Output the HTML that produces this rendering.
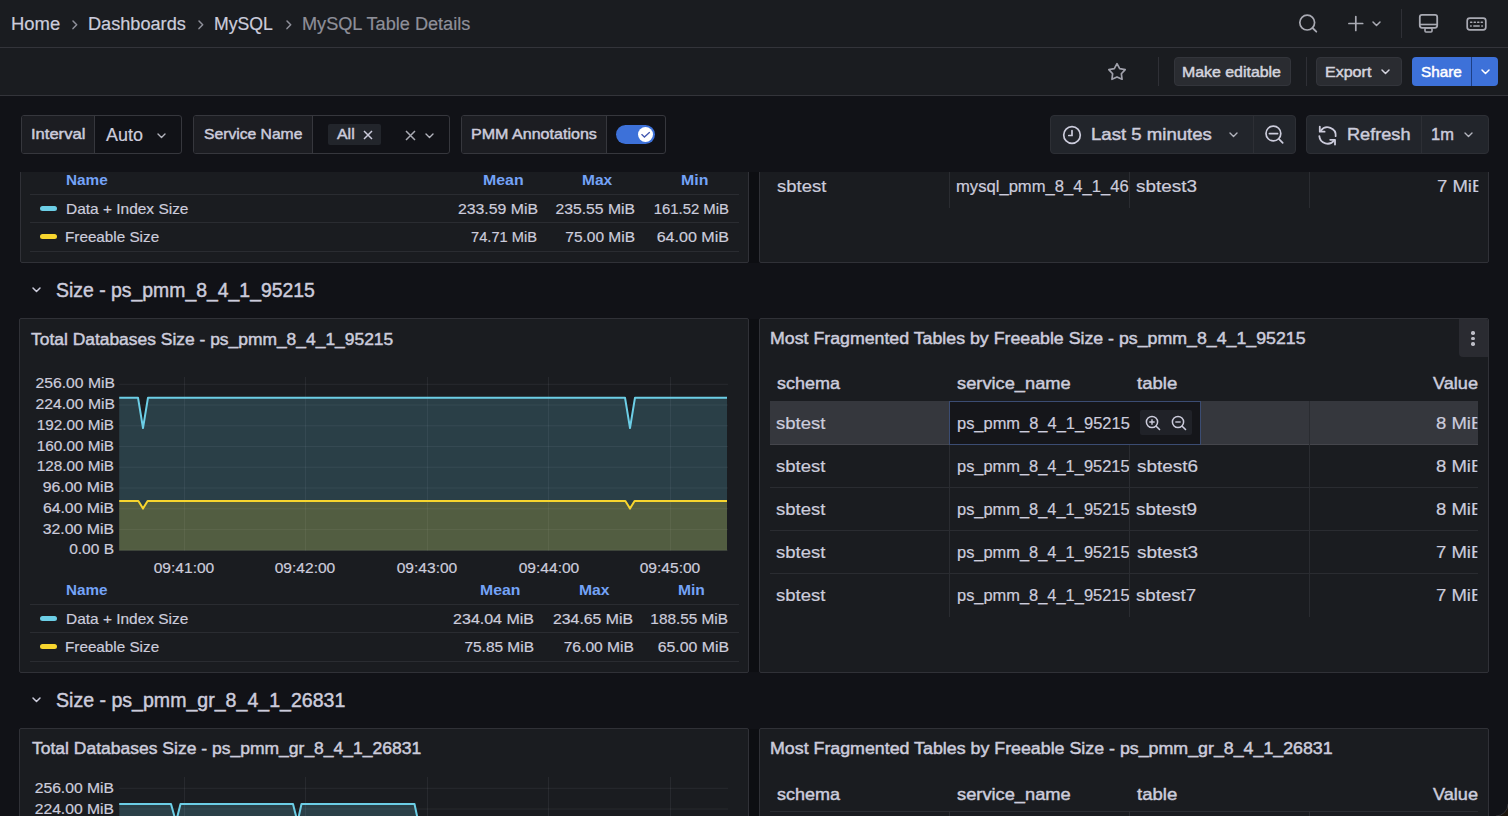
<!DOCTYPE html>
<html><head><meta charset="utf-8">
<style>
*{box-sizing:border-box;margin:0;padding:0}
html,body{width:1508px;height:816px;overflow:hidden;background:#111217;font-family:"Liberation Sans",sans-serif;color:#ccccdc}
.a{position:absolute;white-space:nowrap}
.bar{position:absolute;left:0;width:1508px;background:#1a1c20;border-bottom:1px solid #33343a}
.t{position:absolute;white-space:nowrap;line-height:1;-webkit-text-stroke:0.2px currentColor}
.ic{position:absolute;overflow:visible}
.btn{position:absolute;border-radius:4px;background:#2a2c31;border:1px solid #33353b}
.panel{position:absolute;background:#1a1c20;border:1px solid #303137;border-radius:2px;overflow:hidden}
.grp{position:absolute;border:1px solid #36373d;border-radius:3px;overflow:hidden;background:#111217}
.lbl{position:absolute;top:0;bottom:0;left:0;background:#1c1d22;border-right:1px solid #36373d}
.hl{position:absolute;height:1px;background:#2a2c31}
.vl{position:absolute;width:1px;background:#2a2c31}
.b{-webkit-text-stroke:0.3px currentColor}
.bb{font-weight:bold;-webkit-text-stroke:0}
.m{-webkit-text-stroke:0.45px currentColor}
</style></head><body>
<div class="panel" style="left:20px;top:150px;width:729px;height:113px"></div>
<div class="panel" style="left:759px;top:150px;width:730px;height:113px"></div>
<div id="t0" class="t bb" style="top:173.00px;font-size:14px;color:#74a3f7;left:65.76px;transform-origin:0 0;transform:scaleX(1.0950)">Name</div>
<div id="t1" class="t bb" style="top:173.00px;font-size:14px;color:#74a3f7;left:483.25px;transform-origin:0 0;transform:scaleX(1.1340)">Mean</div>
<div id="t2" class="t bb" style="top:173.00px;font-size:14px;color:#74a3f7;left:581.81px;transform-origin:0 0;transform:scaleX(1.1072)">Max</div>
<div id="t3" class="t bb" style="top:173.00px;font-size:14px;color:#74a3f7;left:680.70px;transform-origin:0 0;transform:scaleX(1.1338)">Min</div>
<div class="hl" style="left:30px;top:194px;width:709px"></div>
<div class="hl" style="left:30px;top:222px;width:709px"></div>
<div class="hl" style="left:30px;top:251px;width:709px"></div>
<div class="a" style="left:39.5px;top:205.5px;width:17.5px;height:5.3px;border-radius:3px;background:#6ccee6"></div>
<div id="t4" class="t " style="top:201.00px;font-size:15px;color:#ccccdc;left:65.71px;transform-origin:0 0;transform:scaleX(1.0306)">Data + Index Size</div>
<div id="t5" class="t " style="top:201.00px;font-size:15px;color:#ccccdc;left:37.79px;width:500px;text-align:right;transform-origin:100% 0;transform:scaleX(1.0543)">233.59 MiB</div>
<div id="t6" class="t " style="top:201.00px;font-size:15px;color:#ccccdc;left:135.43px;width:500px;text-align:right;transform-origin:100% 0;transform:scaleX(1.0469)">235.55 MiB</div>
<div id="t7" class="t " style="top:201.00px;font-size:15px;color:#ccccdc;left:228.76px;width:500px;text-align:right;transform-origin:100% 0;transform:scaleX(0.9919)">161.52 MiB</div>
<div class="a" style="left:39.5px;top:233.5px;width:17.5px;height:5.3px;border-radius:3px;background:#f7d52e"></div>
<div id="t8" class="t " style="top:229.00px;font-size:15px;color:#ccccdc;left:65.26px;transform-origin:0 0;transform:scaleX(1.0170)">Freeable Size</div>
<div id="t9" class="t " style="top:229.00px;font-size:15px;color:#ccccdc;left:36.98px;width:500px;text-align:right;transform-origin:100% 0;transform:scaleX(0.9761)">74.71 MiB</div>
<div id="t10" class="t " style="top:229.00px;font-size:15px;color:#ccccdc;left:135.00px;width:500px;text-align:right;transform-origin:100% 0;transform:scaleX(1.0319)">75.00 MiB</div>
<div id="t11" class="t " style="top:229.00px;font-size:15px;color:#ccccdc;left:228.79px;width:500px;text-align:right;transform-origin:100% 0;transform:scaleX(1.0710)">64.00 MiB</div>
<div class="vl" style="left:949px;top:172px;height:36px"></div>
<div class="vl" style="left:1129px;top:172px;height:36px"></div>
<div class="vl" style="left:1309px;top:172px;height:36px"></div>
<div id="t12" class="t " style="top:178.00px;font-size:17px;color:#ccccdc;left:776.95px;transform-origin:0 0;transform:scaleX(1.0862)">sbtest</div>
<div id="t13" class="t " style="top:178.00px;font-size:17px;color:#ccccdc;left:955.95px;transform-origin:0 0;transform:scaleX(0.9774)">mysql_pmm_8_4_1_46</div>
<div id="t14" class="t " style="top:178.00px;font-size:17px;color:#ccccdc;left:1135.77px;transform-origin:0 0;transform:scaleX(1.1122)">sbtest3</div>
<div id="t15" class="t " style="top:178.00px;font-size:17px;color:#ccccdc;left:1436.52px;width:38.09px;overflow:hidden;transform-origin:0 0;transform:scaleX(1.0890)">7 MiB</div>
<svg class="ic" style="left:32px;top:286.7px" width="9" height="5.5" viewBox="0 0 9 5.5"><path d="M1 1l3.5 3.5 3.5 -3.5" fill="none" stroke="#ccccdc" stroke-width="1.5" stroke-linecap="round" stroke-linejoin="round"/></svg>
<div id="t16" class="t m" style="top:281.00px;font-size:19.5px;color:#ccccdc;left:55.63px;transform-origin:0 0;transform:scaleX(0.9951)">Size - ps_pmm_8_4_1_95215</div>
<div class="a" style="left:749px;top:172px;width:10px;height:91px;background:#0d0e12"></div>
<div class="a" style="left:749px;top:319px;width:10px;height:353px;background:#0d0e12"></div>
<div class="a" style="left:749px;top:729px;width:10px;height:90px;background:#0d0e12"></div>
<div class="panel" style="left:19px;top:318px;width:730px;height:355px"></div>
<div id="t17" class="t m" style="top:332.00px;font-size:16px;color:#ccccdc;left:30.96px;transform-origin:0 0;transform:scaleX(1.0888)">Total Databases Size - ps_pmm_8_4_1_95215</div>
<div id="t18" class="t " style="top:375.00px;font-size:15px;color:#ccccdc;left:-385.46px;width:500px;text-align:right;transform-origin:100% 0;transform:scaleX(1.0469)">256.00 MiB</div>
<div id="t19" class="t " style="top:396.00px;font-size:15px;color:#ccccdc;left:-385.46px;width:500px;text-align:right;transform-origin:100% 0;transform:scaleX(1.0469)">224.00 MiB</div>
<div id="t20" class="t " style="top:417.00px;font-size:15px;color:#ccccdc;left:-386.09px;width:500px;text-align:right;transform-origin:100% 0;transform:scaleX(1.0192)">192.00 MiB</div>
<div id="t21" class="t " style="top:438.00px;font-size:15px;color:#ccccdc;left:-386.09px;width:500px;text-align:right;transform-origin:100% 0;transform:scaleX(1.0192)">160.00 MiB</div>
<div id="t22" class="t " style="top:458.00px;font-size:15px;color:#ccccdc;left:-386.09px;width:500px;text-align:right;transform-origin:100% 0;transform:scaleX(1.0192)">128.00 MiB</div>
<div id="t23" class="t " style="top:479.00px;font-size:15px;color:#ccccdc;left:-385.53px;width:500px;text-align:right;transform-origin:100% 0;transform:scaleX(1.0562)">96.00 MiB</div>
<div id="t24" class="t " style="top:500.00px;font-size:15px;color:#ccccdc;left:-386.42px;width:500px;text-align:right;transform-origin:100% 0;transform:scaleX(1.0526)">64.00 MiB</div>
<div id="t25" class="t " style="top:521.00px;font-size:15px;color:#ccccdc;left:-386.24px;width:500px;text-align:right;transform-origin:100% 0;transform:scaleX(1.0547)">32.00 MiB</div>
<div id="t26" class="t " style="top:541.00px;font-size:15px;color:#ccccdc;left:-385.89px;width:500px;text-align:right;transform-origin:100% 0;transform:scaleX(1.0345)">0.00 B</div>
<div id="t27" class="t " style="top:560.00px;font-size:15px;color:#ccccdc;left:83.92px;width:200px;text-align:center;transform-origin:50% 0;transform:scaleX(1.0374)">09:41:00</div>
<div id="t28" class="t " style="top:560.00px;font-size:15px;color:#ccccdc;left:205.32px;width:200px;text-align:center;transform-origin:50% 0;transform:scaleX(1.0374)">09:42:00</div>
<div id="t29" class="t " style="top:560.00px;font-size:15px;color:#ccccdc;left:326.52px;width:200px;text-align:center;transform-origin:50% 0;transform:scaleX(1.0374)">09:43:00</div>
<div id="t30" class="t " style="top:560.00px;font-size:15px;color:#ccccdc;left:448.72px;width:200px;text-align:center;transform-origin:50% 0;transform:scaleX(1.0374)">09:44:00</div>
<div id="t31" class="t " style="top:560.00px;font-size:15px;color:#ccccdc;left:569.92px;width:200px;text-align:center;transform-origin:50% 0;transform:scaleX(1.0374)">09:45:00</div>
<div id="t32" class="t bb" style="top:583.00px;font-size:14px;color:#74a3f7;left:65.62px;transform-origin:0 0;transform:scaleX(1.0882)">Name</div>
<div id="t33" class="t bb" style="top:583.00px;font-size:14px;color:#74a3f7;left:479.79px;transform-origin:0 0;transform:scaleX(1.1255)">Mean</div>
<div id="t34" class="t bb" style="top:583.00px;font-size:14px;color:#74a3f7;left:578.96px;transform-origin:0 0;transform:scaleX(1.1216)">Max</div>
<div id="t35" class="t bb" style="top:583.00px;font-size:14px;color:#74a3f7;left:677.72px;transform-origin:0 0;transform:scaleX(1.1145)">Min</div>
<div class="hl" style="left:30px;top:604px;width:709px"></div>
<div class="hl" style="left:30px;top:632px;width:709px"></div>
<div class="hl" style="left:30px;top:661px;width:709px"></div>
<div class="a" style="left:39.5px;top:615.5px;width:17.5px;height:5.3px;border-radius:3px;background:#6ccee6"></div>
<div id="t36" class="t " style="top:611.00px;font-size:15px;color:#ccccdc;left:65.71px;transform-origin:0 0;transform:scaleX(1.0288)">Data + Index Size</div>
<div id="t37" class="t " style="top:611.00px;font-size:15px;color:#ccccdc;left:33.87px;width:500px;text-align:right;transform-origin:100% 0;transform:scaleX(1.0658)">234.04 MiB</div>
<div id="t38" class="t " style="top:611.00px;font-size:15px;color:#ccccdc;left:132.82px;width:500px;text-align:right;transform-origin:100% 0;transform:scaleX(1.0536)">234.65 MiB</div>
<div id="t39" class="t " style="top:611.00px;font-size:15px;color:#ccccdc;left:228.36px;width:500px;text-align:right;transform-origin:100% 0;transform:scaleX(1.0231)">188.55 MiB</div>
<div class="a" style="left:39.5px;top:643.5px;width:17.5px;height:5.3px;border-radius:3px;background:#f7d52e"></div>
<div id="t40" class="t " style="top:639.00px;font-size:15px;color:#ccccdc;left:65.26px;transform-origin:0 0;transform:scaleX(1.0170)">Freeable Size</div>
<div id="t41" class="t " style="top:639.00px;font-size:15px;color:#ccccdc;left:34.31px;width:500px;text-align:right;transform-origin:100% 0;transform:scaleX(1.0306)">75.85 MiB</div>
<div id="t42" class="t " style="top:639.00px;font-size:15px;color:#ccccdc;left:133.71px;width:500px;text-align:right;transform-origin:100% 0;transform:scaleX(1.0412)">76.00 MiB</div>
<div id="t43" class="t " style="top:639.00px;font-size:15px;color:#ccccdc;left:228.66px;width:500px;text-align:right;transform-origin:100% 0;transform:scaleX(1.0550)">65.00 MiB</div>
<svg class="ic" style="left:0;top:0" width="1508" height="816"><line x1="119.2" y1="384.3" x2="728" y2="384.3" stroke="#ccccdc" stroke-opacity="0.08" stroke-width="1"/><line x1="119.2" y1="405.04" x2="728" y2="405.04" stroke="#ccccdc" stroke-opacity="0.08" stroke-width="1"/><line x1="119.2" y1="425.78000000000003" x2="728" y2="425.78000000000003" stroke="#ccccdc" stroke-opacity="0.08" stroke-width="1"/><line x1="119.2" y1="446.52" x2="728" y2="446.52" stroke="#ccccdc" stroke-opacity="0.08" stroke-width="1"/><line x1="119.2" y1="467.26" x2="728" y2="467.26" stroke="#ccccdc" stroke-opacity="0.08" stroke-width="1"/><line x1="119.2" y1="488.0" x2="728" y2="488.0" stroke="#ccccdc" stroke-opacity="0.08" stroke-width="1"/><line x1="119.2" y1="508.74" x2="728" y2="508.74" stroke="#ccccdc" stroke-opacity="0.08" stroke-width="1"/><line x1="119.2" y1="529.48" x2="728" y2="529.48" stroke="#ccccdc" stroke-opacity="0.08" stroke-width="1"/><line x1="119.2" y1="550.22" x2="728" y2="550.22" stroke="#ccccdc" stroke-opacity="0.08" stroke-width="1"/><line x1="184.5" y1="377" x2="184.5" y2="550.6" stroke="#ccccdc" stroke-opacity="0.08" stroke-width="1"/><line x1="305.5" y1="377" x2="305.5" y2="550.6" stroke="#ccccdc" stroke-opacity="0.08" stroke-width="1"/><line x1="427.5" y1="377" x2="427.5" y2="550.6" stroke="#ccccdc" stroke-opacity="0.08" stroke-width="1"/><line x1="548.5" y1="377" x2="548.5" y2="550.6" stroke="#ccccdc" stroke-opacity="0.08" stroke-width="1"/><line x1="670.5" y1="377" x2="670.5" y2="550.6" stroke="#ccccdc" stroke-opacity="0.08" stroke-width="1"/><path d="M119.2,397.7 L138,397.7 L143,428 L148,397.7 L625,397.7 L630,428 L635,397.7 L727,397.7 L727,550.6 L119.2,550.6 Z" fill="#6ccee6" fill-opacity="0.2"/><path d="M119.2,501.1 L138.4,501.1 L143,508.6 L147.6,501.1 L625.4,501.1 L630,508.6 L634.6,501.1 L727,501.1 L727,550.6 L119.2,550.6 Z" fill="#f7d52e" fill-opacity="0.2"/><path d="M119.2,397.7 L138,397.7 L143,428 L148,397.7 L625,397.7 L630,428 L635,397.7 L727,397.7" fill="none" stroke="#6ccee6" stroke-width="2" stroke-linejoin="round"/><path d="M119.2,501.1 L138.4,501.1 L143,508.6 L147.6,501.1 L625.4,501.1 L630,508.6 L634.6,501.1 L727,501.1" fill="none" stroke="#f7d52e" stroke-width="2" stroke-linejoin="round"/></svg>
<div class="panel" style="left:759px;top:318px;width:730px;height:355px"></div>
<div id="t44" class="t m" style="top:331.00px;font-size:16px;color:#ccccdc;left:769.52px;transform-origin:0 0;transform:scaleX(1.1095)">Most Fragmented Tables by Freeable Size - ps_pmm_8_4_1_95215</div>
<div class="a" style="left:1459px;top:319px;width:29px;height:38px;background:#2a2b31;border-radius:0 2px 0 4px"></div>
<div class="a" style="left:1471.3px;top:331.2px;width:3.4px;height:3.4px;border-radius:50%;background:#bdbdc6"></div>
<div class="a" style="left:1471.3px;top:336.8px;width:3.4px;height:3.4px;border-radius:50%;background:#bdbdc6"></div>
<div class="a" style="left:1471.3px;top:342.40000000000003px;width:3.4px;height:3.4px;border-radius:50%;background:#bdbdc6"></div>
<div id="t45" class="t m" style="top:375.00px;font-size:17px;color:#ccccdc;left:777.30px;transform-origin:0 0;transform:scaleX(1.0572)">schema</div>
<div id="t46" class="t m" style="top:375.00px;font-size:17px;color:#ccccdc;left:957.27px;transform-origin:0 0;transform:scaleX(1.0747)">service_name</div>
<div id="t47" class="t m" style="top:375.00px;font-size:17px;color:#ccccdc;left:1137.42px;transform-origin:0 0;transform:scaleX(1.0905)">table</div>
<div id="t48" class="t m" style="top:375.00px;font-size:17px;color:#ccccdc;left:977.95px;width:500px;text-align:right;transform-origin:100% 0;transform:scaleX(1.0667)">Value</div>
<div class="a" style="left:770px;top:401px;width:708px;height:43px;background:#35373d"></div>
<div class="hl" style="left:770px;top:444px;width:708px;background:#45464c"></div>
<div id="t49" class="t " style="top:415.00px;font-size:17px;color:#ccccdc;left:776.40px;transform-origin:0 0;transform:scaleX(1.0890)">sbtest</div>
<div id="t50" class="t " style="top:415.00px;font-size:17px;color:#ccccdc;left:1436.14px;width:38.44px;overflow:hidden;transform-origin:0 0;transform:scaleX(1.0890)">8 MiB</div>
<div class="hl" style="left:770px;top:487px;width:708px"></div>
<div id="t51" class="t " style="top:458.00px;font-size:17px;color:#ccccdc;left:776.40px;transform-origin:0 0;transform:scaleX(1.0890)">sbtest</div>
<div id="t52" class="t " style="top:458.00px;font-size:17px;color:#ccccdc;left:956.63px;transform-origin:0 0;transform:scaleX(0.9658)">ps_pmm_8_4_1_95215</div>
<div id="t53" class="t " style="top:458.00px;font-size:17px;color:#ccccdc;left:1136.57px;transform-origin:0 0;transform:scaleX(1.1117)">sbtest6</div>
<div id="t54" class="t " style="top:458.00px;font-size:17px;color:#ccccdc;left:1436.14px;width:38.44px;overflow:hidden;transform-origin:0 0;transform:scaleX(1.0890)">8 MiB</div>
<div class="hl" style="left:770px;top:530px;width:708px"></div>
<div id="t55" class="t " style="top:501.00px;font-size:17px;color:#ccccdc;left:776.40px;transform-origin:0 0;transform:scaleX(1.0890)">sbtest</div>
<div id="t56" class="t " style="top:501.00px;font-size:17px;color:#ccccdc;left:956.63px;transform-origin:0 0;transform:scaleX(0.9658)">ps_pmm_8_4_1_95215</div>
<div id="t57" class="t " style="top:501.00px;font-size:17px;color:#ccccdc;left:1136.41px;transform-origin:0 0;transform:scaleX(1.1127)">sbtest9</div>
<div id="t58" class="t " style="top:501.00px;font-size:17px;color:#ccccdc;left:1436.14px;width:38.44px;overflow:hidden;transform-origin:0 0;transform:scaleX(1.0890)">8 MiB</div>
<div class="hl" style="left:770px;top:573px;width:708px"></div>
<div id="t59" class="t " style="top:544.00px;font-size:17px;color:#ccccdc;left:776.40px;transform-origin:0 0;transform:scaleX(1.0890)">sbtest</div>
<div id="t60" class="t " style="top:544.00px;font-size:17px;color:#ccccdc;left:956.63px;transform-origin:0 0;transform:scaleX(0.9658)">ps_pmm_8_4_1_95215</div>
<div id="t61" class="t " style="top:544.00px;font-size:17px;color:#ccccdc;left:1136.53px;transform-origin:0 0;transform:scaleX(1.1139)">sbtest3</div>
<div id="t62" class="t " style="top:544.00px;font-size:17px;color:#ccccdc;left:1436.27px;width:38.32px;overflow:hidden;transform-origin:0 0;transform:scaleX(1.0890)">7 MiB</div>
<div id="t63" class="t " style="top:587.00px;font-size:17px;color:#ccccdc;left:776.40px;transform-origin:0 0;transform:scaleX(1.0890)">sbtest</div>
<div id="t64" class="t " style="top:587.00px;font-size:17px;color:#ccccdc;left:956.63px;transform-origin:0 0;transform:scaleX(0.9658)">ps_pmm_8_4_1_95215</div>
<div id="t65" class="t " style="top:587.00px;font-size:17px;color:#ccccdc;left:1135.78px;transform-origin:0 0;transform:scaleX(1.0977)">sbtest7</div>
<div id="t66" class="t " style="top:587.00px;font-size:17px;color:#ccccdc;left:1436.27px;width:38.32px;overflow:hidden;transform-origin:0 0;transform:scaleX(1.0890)">7 MiB</div>
<div class="vl" style="left:949px;top:401px;height:216px"></div>
<div class="vl" style="left:1129px;top:401px;height:216px"></div>
<div class="vl" style="left:1309px;top:401px;height:216px"></div>
<div class="a" style="left:949px;top:401px;width:252px;height:44px;background:#15161a;border:1px solid #3b4c72"></div>
<div id="t67" class="t " style="top:415.00px;font-size:17px;color:#ccccdc;left:956.78px;transform-origin:0 0;transform:scaleX(0.9673)">ps_pmm_8_4_1_95215</div>
<div class="a" style="left:1140px;top:410px;width:52px;height:25px;background:#202228;border-radius:2px"></div>
<svg class="ic" style="left:1145px;top:415px" width="16" height="16" viewBox="0 0 16 16"><circle cx="7" cy="7" r="5.6" fill="none" stroke="#ccccdc" stroke-width="1.5"/><path d="M11.2 11.2l3.3 3.3" stroke="#ccccdc" stroke-width="1.6" stroke-linecap="round"/><path d="M4.3 7h5.4M7 4.3v5.4" stroke="#ccccdc" stroke-width="1.4"/></svg>
<svg class="ic" style="left:1171px;top:415px" width="16" height="16" viewBox="0 0 16 16"><circle cx="7" cy="7" r="5.6" fill="none" stroke="#ccccdc" stroke-width="1.5"/><path d="M11.2 11.2l3.3 3.3" stroke="#ccccdc" stroke-width="1.6" stroke-linecap="round"/><path d="M4.3 7h5.4" stroke="#ccccdc" stroke-width="1.4"/></svg>
<svg class="ic" style="left:32px;top:696.6999999999999px" width="9" height="5.5" viewBox="0 0 9 5.5"><path d="M1 1l3.5 3.5 3.5 -3.5" fill="none" stroke="#ccccdc" stroke-width="1.5" stroke-linecap="round" stroke-linejoin="round"/></svg>
<div id="t68" class="t m" style="top:691.00px;font-size:19.5px;color:#ccccdc;left:55.77px;transform-origin:0 0;transform:scaleX(1.0033)">Size - ps_pmm_gr_8_4_1_26831</div>
<div class="panel" style="left:19px;top:728px;width:730px;height:120px"></div>
<div id="t69" class="t m" style="top:741.00px;font-size:16px;color:#ccccdc;left:31.86px;transform-origin:0 0;transform:scaleX(1.0939)">Total Databases Size - ps_pmm_gr_8_4_1_26831</div>
<div id="t70" class="t " style="top:780.00px;font-size:15px;color:#ccccdc;left:-385.62px;width:500px;text-align:right;transform-origin:100% 0;transform:scaleX(1.0448)">256.00 MiB</div>
<div id="t71" class="t " style="top:801.00px;font-size:15px;color:#ccccdc;left:-385.62px;width:500px;text-align:right;transform-origin:100% 0;transform:scaleX(1.0448)">224.00 MiB</div>
<svg class="ic" style="left:0;top:0" width="1508" height="816"><line x1="119.2" y1="788.3" x2="728" y2="788.3" stroke="#ccccdc" stroke-opacity="0.08" stroke-width="1"/><line x1="119.2" y1="809.04" x2="728" y2="809.04" stroke="#ccccdc" stroke-opacity="0.08" stroke-width="1"/><line x1="184.5" y1="777" x2="184.5" y2="840" stroke="#ccccdc" stroke-opacity="0.08" stroke-width="1"/><line x1="305.5" y1="777" x2="305.5" y2="840" stroke="#ccccdc" stroke-opacity="0.08" stroke-width="1"/><line x1="427.5" y1="777" x2="427.5" y2="840" stroke="#ccccdc" stroke-opacity="0.08" stroke-width="1"/><line x1="548.5" y1="777" x2="548.5" y2="840" stroke="#ccccdc" stroke-opacity="0.08" stroke-width="1"/><line x1="670.5" y1="777" x2="670.5" y2="840" stroke="#ccccdc" stroke-opacity="0.08" stroke-width="1"/><path d="M119.2,804 L171,804 L176,822 L180.5,804 L293,804 L297.5,822 L301.5,804 L414.5,804 L420,830 L420,840 L119.2,840 Z" fill="#6ccee6" fill-opacity="0.2"/><path d="M119.2,804 L171,804 L176,822 L180.5,804 L293,804 L297.5,822 L301.5,804 L414.5,804 L420,830" fill="none" stroke="#6ccee6" stroke-width="2" stroke-linejoin="round"/></svg>
<div class="panel" style="left:759px;top:728px;width:730px;height:120px"></div>
<div id="t72" class="t m" style="top:741.00px;font-size:16px;color:#ccccdc;left:769.62px;transform-origin:0 0;transform:scaleX(1.1125)">Most Fragmented Tables by Freeable Size - ps_pmm_gr_8_4_1_26831</div>
<div id="t73" class="t m" style="top:786.00px;font-size:17px;color:#ccccdc;left:777.30px;transform-origin:0 0;transform:scaleX(1.0572)">schema</div>
<div id="t74" class="t m" style="top:786.00px;font-size:17px;color:#ccccdc;left:957.27px;transform-origin:0 0;transform:scaleX(1.0747)">service_name</div>
<div id="t75" class="t m" style="top:786.00px;font-size:17px;color:#ccccdc;left:1137.42px;transform-origin:0 0;transform:scaleX(1.0905)">table</div>
<div id="t76" class="t m" style="top:786.00px;font-size:17px;color:#ccccdc;left:977.95px;width:500px;text-align:right;transform-origin:100% 0;transform:scaleX(1.0667)">Value</div>
<div class="hl" style="left:770px;top:811px;width:708px"></div>
<div class="vl" style="left:949px;top:811px;height:10px"></div>
<div class="vl" style="left:1129px;top:811px;height:10px"></div>
<div class="vl" style="left:1309px;top:811px;height:10px"></div>
<div class="a" style="left:0;top:96px;width:1508px;height:76px;background:#111217"></div>
<div class="bar" style="top:0;height:48px"></div>
<div class="bar" style="top:48px;height:48px"></div>
<div id="t77" class="t " style="top:15.00px;font-size:18px;color:#ccccdc;left:10.63px;transform-origin:0 0;transform:scaleX(1.0242)">Home</div>
<div id="t78" class="t " style="top:15.00px;font-size:18px;color:#ccccdc;left:87.86px;transform-origin:0 0;transform:scaleX(1.0077)">Dashboards</div>
<div id="t79" class="t " style="top:15.00px;font-size:18px;color:#ccccdc;left:213.91px;transform-origin:0 0;transform:scaleX(0.9806)">MySQL</div>
<div id="t80" class="t " style="top:15.00px;font-size:18px;color:#8e8f99;left:302.09px;transform-origin:0 0;transform:scaleX(1.0074)">MySQL Table Details</div>
<svg class="ic" style="left:71.8px;top:20.3px" width="7" height="10" viewBox="0 0 7 10"><path d="M1 1l3.7 3.8-3.7 3.8" fill="none" stroke="#8e8f99" stroke-width="1.5" stroke-linecap="round" stroke-linejoin="round"/></svg>
<svg class="ic" style="left:198.20000000000002px;top:20.3px" width="7" height="10" viewBox="0 0 7 10"><path d="M1 1l3.7 3.8-3.7 3.8" fill="none" stroke="#8e8f99" stroke-width="1.5" stroke-linecap="round" stroke-linejoin="round"/></svg>
<svg class="ic" style="left:285.90000000000003px;top:20.3px" width="7" height="10" viewBox="0 0 7 10"><path d="M1 1l3.7 3.8-3.7 3.8" fill="none" stroke="#8e8f99" stroke-width="1.5" stroke-linecap="round" stroke-linejoin="round"/></svg>
<svg class="ic" style="left:0;top:0" width="1508" height="100"><circle cx="1307.2" cy="22.6" r="7.4" fill="none" stroke="#a9aab3" stroke-width="1.7"/><path d="M1312.6 28l3.7 3.7" stroke="#a9aab3" stroke-width="1.8" stroke-linecap="round"/><path d="M1355.8 16.6v13.8M1348.9 23.5h13.8" stroke="#a9aab3" stroke-width="1.7" stroke-linecap="round"/></svg>
<svg class="ic" style="left:1372px;top:21px" width="9" height="5.5" viewBox="0 0 9 5.5"><path d="M1 1l3.5 3.5 3.5 -3.5" fill="none" stroke="#a9aab3" stroke-width="1.5" stroke-linecap="round" stroke-linejoin="round"/></svg>
<div class="vl" style="left:1401px;top:9px;height:29px;background:#2f3036"></div>
<svg class="ic" style="left:1418px;top:13px" width="21" height="21" viewBox="0 0 21 21"><rect x="1.8" y="1.8" width="17.4" height="13" rx="2.2" fill="none" stroke="#a9aab3" stroke-width="1.8"/><path d="M1.8 11.5h17.4" stroke="#a9aab3" stroke-width="1.6"/><rect x="7" y="15" width="7" height="4" rx="1" fill="none" stroke="#a9aab3" stroke-width="1.6"/></svg>
<svg class="ic" style="left:1466px;top:16.5px" width="21" height="14" viewBox="0 0 21 14"><rect x="1.2" y="1.2" width="18.6" height="11.6" rx="2.6" fill="none" stroke="#a9aab3" stroke-width="1.7"/><path d="M4.6 5.2h1.2M8.2 5.2h1.2M11.7 5.2h1.2M15.2 5.2h1.2M4.6 9h.6M7.8 9h5.4M15.8 9h.6" stroke="#a9aab3" stroke-width="1.5" stroke-linecap="round"/></svg>
<svg class="ic" style="left:0;top:0" width="1508" height="100"><path d="M1117.00,63.70 L1119.70,68.58 L1125.18,69.64 L1121.37,73.72 L1122.05,79.26 L1117.00,76.90 L1111.95,79.26 L1112.63,73.72 L1108.82,69.64 L1114.30,68.58 Z" fill="none" stroke="#a0a1ab" stroke-width="1.7" stroke-linejoin="round"/></svg>
<div class="vl" style="left:1158px;top:57px;height:29px;background:#2f3036"></div>
<div class="btn" style="left:1174px;top:57px;width:117px;height:29px"></div>
<div id="t81" class="t m" style="top:65.00px;font-size:14px;color:#d4d4de;left:1182.32px;transform-origin:0 0;transform:scaleX(1.1353)">Make editable</div>
<div class="vl" style="left:1306px;top:57px;height:29px;background:#2f3036"></div>
<div class="btn" style="left:1316px;top:57px;width:86px;height:29px"></div>
<div id="t82" class="t m" style="top:65.00px;font-size:14px;color:#d4d4de;left:1325.25px;transform-origin:0 0;transform:scaleX(1.1451)">Export</div>
<svg class="ic" style="left:1380.5px;top:68.5px" width="9" height="5.5" viewBox="0 0 9 5.5"><path d="M1 1l3.5 3.5 3.5 -3.5" fill="none" stroke="#d4d4de" stroke-width="1.5" stroke-linecap="round" stroke-linejoin="round"/></svg>
<div class="btn" style="left:1412px;top:57px;width:86px;height:29px;background:#3d71d9;border:none"></div>
<div class="vl" style="left:1471px;top:57px;height:29px;background:#1d3f85"></div>
<div id="t83" class="t m" style="top:65.00px;font-size:14px;color:#ffffff;left:1420.94px;transform-origin:0 0;transform:scaleX(1.0915)">Share</div>
<svg class="ic" style="left:1481px;top:68.5px" width="9" height="5.5" viewBox="0 0 9 5.5"><path d="M1 1l3.5 3.5 3.5 -3.5" fill="none" stroke="#ffffff" stroke-width="1.5" stroke-linecap="round" stroke-linejoin="round"/></svg>
<div class="grp" style="left:21px;top:115px;width:161px;height:39px"><div class="lbl" style="width:73px"></div></div>
<div id="t84" class="t m" style="top:127.00px;font-size:14.5px;color:#ccccdc;left:31.04px;transform-origin:0 0;transform:scaleX(1.1421)">Interval</div>
<div id="t85" class="t " style="top:126.00px;font-size:18px;color:#ccccdc;left:105.67px;transform-origin:0 0;transform:scaleX(0.9966)">Auto</div>
<svg class="ic" style="left:157px;top:133px" width="9" height="5.5" viewBox="0 0 9 5.5"><path d="M1 1l3.5 3.5 3.5 -3.5" fill="none" stroke="#b4b5be" stroke-width="1.4" stroke-linecap="round" stroke-linejoin="round"/></svg>
<div class="grp" style="left:193px;top:115px;width:257px;height:39px"><div class="lbl" style="width:119px"></div></div>
<div id="t86" class="t m" style="top:127.00px;font-size:14.5px;color:#ccccdc;left:203.75px;transform-origin:0 0;transform:scaleX(1.0803)">Service Name</div>
<div class="a" style="left:328px;top:124px;width:53px;height:21px;background:#22252b;border-radius:2px"></div>
<div id="t87" class="t m" style="top:127.00px;font-size:14.5px;color:#ccccdc;left:337.33px;transform-origin:0 0;transform:scaleX(1.0982)">All</div>
<svg class="ic" style="left:363px;top:129.6px" width="10" height="10" viewBox="0 0 10 10"><path d="M1 1l8 8M9 1l-8 8" stroke="#ccccdc" stroke-width="1.5"/></svg>
<svg class="ic" style="left:404.5px;top:130px" width="11" height="11" viewBox="0 0 11 11"><path d="M1 1l9 9M10 1l-9 9" stroke="#a9aab3" stroke-width="1.5"/></svg>
<svg class="ic" style="left:425px;top:132.5px" width="9" height="5.5" viewBox="0 0 9 5.5"><path d="M1 1l3.5 3.5 3.5 -3.5" fill="none" stroke="#b4b5be" stroke-width="1.4" stroke-linecap="round" stroke-linejoin="round"/></svg>
<div class="grp" style="left:461px;top:115px;width:205px;height:39px"><div class="lbl" style="width:145px"></div></div>
<div id="t88" class="t m" style="top:127.00px;font-size:14.5px;color:#ccccdc;left:470.78px;transform-origin:0 0;transform:scaleX(1.1076)">PMM Annotations</div>
<div class="a" style="left:616px;top:125px;width:39px;height:19px;border-radius:10px;background:#3d71d9"></div>
<div class="a" style="left:638px;top:127px;width:15px;height:15px;border-radius:50%;background:#fff"></div>
<svg class="ic" style="left:640px;top:130px" width="11" height="9" viewBox="0 0 11 9"><path d="M1.8 4.6l2.6 2.4 5-4.6" fill="none" stroke="#4458b0" stroke-width="1.3" stroke-linecap="round"/></svg>
<div class="btn" style="left:1050px;top:115px;width:246px;height:39px;background:#22252b;border:1px solid #2d2f35"></div>
<div class="vl" style="left:1253px;top:116px;height:37px;background:#2d2f35"></div>
<svg class="ic" style="left:1062px;top:125px" width="20" height="20" viewBox="0 0 20 20"><circle cx="10" cy="10" r="8.3" fill="none" stroke="#ccccdc" stroke-width="1.7"/><path d="M10 5.5v5H6.8" fill="none" stroke="#ccccdc" stroke-width="1.7" stroke-linecap="round"/></svg>
<div id="t89" class="t m" style="top:126.00px;font-size:17px;color:#ccccdc;left:1090.84px;transform-origin:0 0;transform:scaleX(1.0932)">Last 5 minutes</div>
<svg class="ic" style="left:1229px;top:132px" width="9" height="5.5" viewBox="0 0 9 5.5"><path d="M1 1l3.5 3.5 3.5 -3.5" fill="none" stroke="#b4b5be" stroke-width="1.4" stroke-linecap="round" stroke-linejoin="round"/></svg>
<svg class="ic" style="left:0;top:100px" width="1508" height="60" viewBox="0 100 1508 60"><circle cx="1273.4" cy="133.5" r="7.4" fill="none" stroke="#ccccdc" stroke-width="1.7"/><path d="M1269.4 133.6h8.2M1278.8 138.9l3.9 3.9" stroke="#ccccdc" stroke-width="1.7" stroke-linecap="round"/></svg>
<div class="btn" style="left:1306px;top:115px;width:183px;height:39px;background:#22252b;border:1px solid #2d2f35"></div>
<div class="vl" style="left:1421px;top:116px;height:37px;background:#2d2f35"></div>
<svg class="ic" style="left:1316px;top:123.5px" width="23" height="23" viewBox="0 0 23 23"><path d="M4.8 6.8A8.2 8.2 0 0 1 19.67 12.2M3.33 12.2A8.2 8.2 0 0 0 18.2 16.2" fill="none" stroke="#ccccdc" stroke-width="1.8" stroke-linecap="round"/><path d="M3.8 2.6v5.1h4.8M14.2 15.8h4.8v4.8" fill="none" stroke="#ccccdc" stroke-width="1.8" stroke-linecap="round" stroke-linejoin="round"/></svg>
<div id="t90" class="t m" style="top:126.00px;font-size:17px;color:#ccccdc;left:1346.87px;transform-origin:0 0;transform:scaleX(1.0668)">Refresh</div>
<div id="t91" class="t m" style="top:126.00px;font-size:17px;color:#ccccdc;left:1430.62px;transform-origin:0 0;transform:scaleX(0.9673)">1m</div>
<svg class="ic" style="left:1464px;top:132px" width="9" height="5.5" viewBox="0 0 9 5.5"><path d="M1 1l3.5 3.5 3.5 -3.5" fill="none" stroke="#b4b5be" stroke-width="1.4" stroke-linecap="round" stroke-linejoin="round"/></svg>
<svg class="ic" style="left:1496px;top:804px" width="12" height="12" viewBox="0 0 12 12"><path d="M12 0V12H0A12 12 0 0 0 12 0Z" fill="#1b140d"/><path d="M12 0A12 12 0 0 1 0 12" fill="none" stroke="#3a3a40" stroke-width="0.8"/></svg>
</body></html>
